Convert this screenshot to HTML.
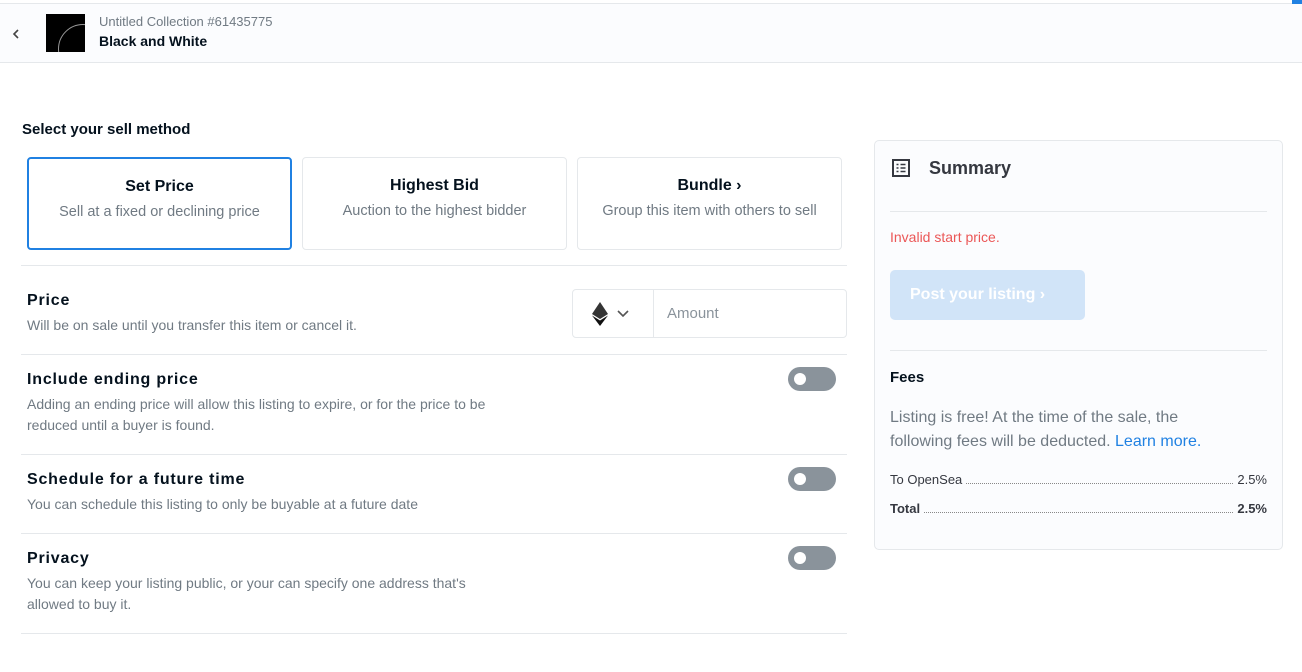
<!DOCTYPE html>
<html><head><style>
*{box-sizing:border-box;margin:0;padding:0}
body{width:1302px;height:672px;background:#fff;font-family:"Liberation Sans",sans-serif;color:#353840;position:relative;overflow:hidden}
.abs{position:absolute}
.hdr{left:0;top:3px;width:1302px;height:60px;background:#fbfcfe;border-bottom:1px solid #e5e8eb;border-top:1px solid #e5e8eb}
.card{position:absolute;top:157px;width:265px;height:93px;border:1px solid #e5e8eb;border-radius:4px;text-align:center}
.card b{display:block;font-size:16px;margin-top:19px;color:#04111d}
.card span{display:block;font-size:14.5px;color:#707a83;margin-top:8px}
.t{font-size:16px;font-weight:bold;letter-spacing:.8px;color:#04111d}
.d{font-size:14px;color:#707a83;line-height:21px}
.hr{position:absolute;left:21px;width:826px;height:1px;background:#e5e8eb}
.tog{position:absolute;left:788px;width:48px;height:24px;border-radius:12px;background:#8a939b}
.tog::after{content:"";position:absolute;left:6px;top:6px;width:12px;height:12px;border-radius:50%;background:#fff}
</style></head><body>
<div class="abs hdr"></div>
<div class="abs" style="left:1292px;top:0;width:10px;height:4px;background:#2081e2"></div>
<svg class="abs" style="left:12px;top:29px" width="8" height="10" viewBox="0 0 8 10"><path d="M6 1L2 5l4 4" fill="none" stroke="#444" stroke-width="1.6"/></svg>
<div class="abs" style="left:46px;top:14px;width:39px;height:38px;background:#000;overflow:hidden"><div style="position:absolute;left:12px;top:10px;width:50px;height:50px;border:1px solid #999;border-radius:50%"></div></div>
<div class="abs" style="left:99px;top:14px;font-size:13px;color:#707a83">Untitled Collection #61435775</div>
<div class="abs" style="left:99px;top:33px;font-size:14px;font-weight:bold;color:#04111d">Black and White</div>
<div class="abs" style="left:22px;top:121px;font-size:15px;font-weight:bold;color:#04111d">Select your sell method</div>
<div class="card" style="left:27px;border:2px solid #2081e2"><b>Set Price</b><span>Sell at a fixed or declining price</span></div>
<div class="card" style="left:302px"><b>Highest Bid</b><span>Auction to the highest bidder</span></div>
<div class="card" style="left:577px"><b>Bundle &#8250;</b><span>Group this item with others to sell</span></div>
<div class="hr" style="top:265px"></div>
<div class="abs t" style="left:27px;top:292px">Price</div>
<div class="abs d" style="left:27px;top:315px">Will be on sale until you transfer this item or cancel it.</div>
<div class="abs" style="left:572px;top:289px;width:275px;height:49px;border:1px solid #e5e8eb;border-radius:4px">
<div style="position:absolute;left:80px;top:0;width:1px;height:47px;background:#e5e8eb"></div>
<svg style="position:absolute;left:19px;top:12px" width="16" height="24" viewBox="0 0 16 24"><path d="M8 0L0 12l8 5 8-5z" fill="#343434"/><path d="M8 18.5L0 13.5 8 24l8-10.5z" fill="#111"/></svg>
<svg style="position:absolute;left:44px;top:20px" width="12" height="8" viewBox="0 0 12 8"><path d="M1 1l5 5 5-5" fill="none" stroke="#555" stroke-width="1.6"/></svg>
<div style="position:absolute;left:94px;top:15px;font-size:15px;color:#8a939b">Amount</div></div>
<div class="hr" style="top:354px"></div>
<div class="abs t" style="left:27px;top:371px">Include ending price</div>
<div class="abs d" style="left:27px;top:394px;width:500px">Adding an ending price will allow this listing to expire, or for the price to be reduced until a buyer is found.</div>
<div class="tog" style="top:367px"></div>
<div class="hr" style="top:454px"></div>
<div class="abs t" style="left:27px;top:471px">Schedule for a future time</div>
<div class="abs d" style="left:27px;top:494px">You can schedule this listing to only be buyable at a future date</div>
<div class="tog" style="top:467px"></div>
<div class="hr" style="top:533px"></div>
<div class="abs t" style="left:27px;top:550px">Privacy</div>
<div class="abs d" style="left:27px;top:573px;width:470px">You can keep your listing public, or your can specify one address that's allowed to buy it.</div>
<div class="tog" style="top:546px"></div>
<div class="hr" style="top:633px"></div>
<div class="abs" style="left:874px;top:140px;width:409px;height:410px;border:1px solid #e5e8eb;border-radius:5px;background:#fbfcfe"></div>
<svg class="abs" style="left:892px;top:159px" width="18" height="18" viewBox="0 0 18 18" fill="none" stroke="#353840" stroke-width="2"><rect x="1" y="1" width="16" height="16"/><path d="M4.5 5.5h2M4.5 9h2M4.5 12.5h2M8.5 5.5h5M8.5 9h5M8.5 12.5h5" stroke-width="1.6"/></svg>
<div class="abs" style="left:929px;top:158px;font-size:18px;font-weight:bold;color:#353840">Summary</div>
<div class="abs" style="left:890px;top:211px;width:377px;height:1px;background:#e5e8eb"></div>
<div class="abs" style="left:890px;top:229px;font-size:14px;color:#eb5757">Invalid start price.</div>
<div class="abs" style="left:890px;top:270px;width:195px;height:50px;border-radius:5px;background:#d1e4f8;color:#fff;font-weight:bold;font-size:16px;line-height:50px;padding-left:20px">Post your listing &#8250;</div>
<div class="abs" style="left:890px;top:350px;width:377px;height:1px;background:#e5e8eb"></div>
<div class="abs" style="left:890px;top:369px;font-size:15px;font-weight:bold;color:#04111d">Fees</div>
<div class="abs" style="left:890px;top:406px;width:345px;font-size:16px;line-height:24px;color:#707a83">Listing is free! At the time of the sale, the following fees will be deducted. <span style="color:#2081e2">Learn more.</span></div>
<div class="abs" style="left:890px;top:472px;width:377px;font-size:13px;display:flex;align-items:flex-end"><span>To OpenSea</span><span style="flex:1;border-bottom:1px dotted #888;margin:0 4px 3px"></span><span>2.5%</span></div>
<div class="abs" style="left:890px;top:501px;width:377px;font-size:13px;font-weight:bold;display:flex;align-items:flex-end"><span>Total</span><span style="flex:1;border-bottom:1px dotted #888;margin:0 4px 3px"></span><span>2.5%</span></div>
</body></html>
